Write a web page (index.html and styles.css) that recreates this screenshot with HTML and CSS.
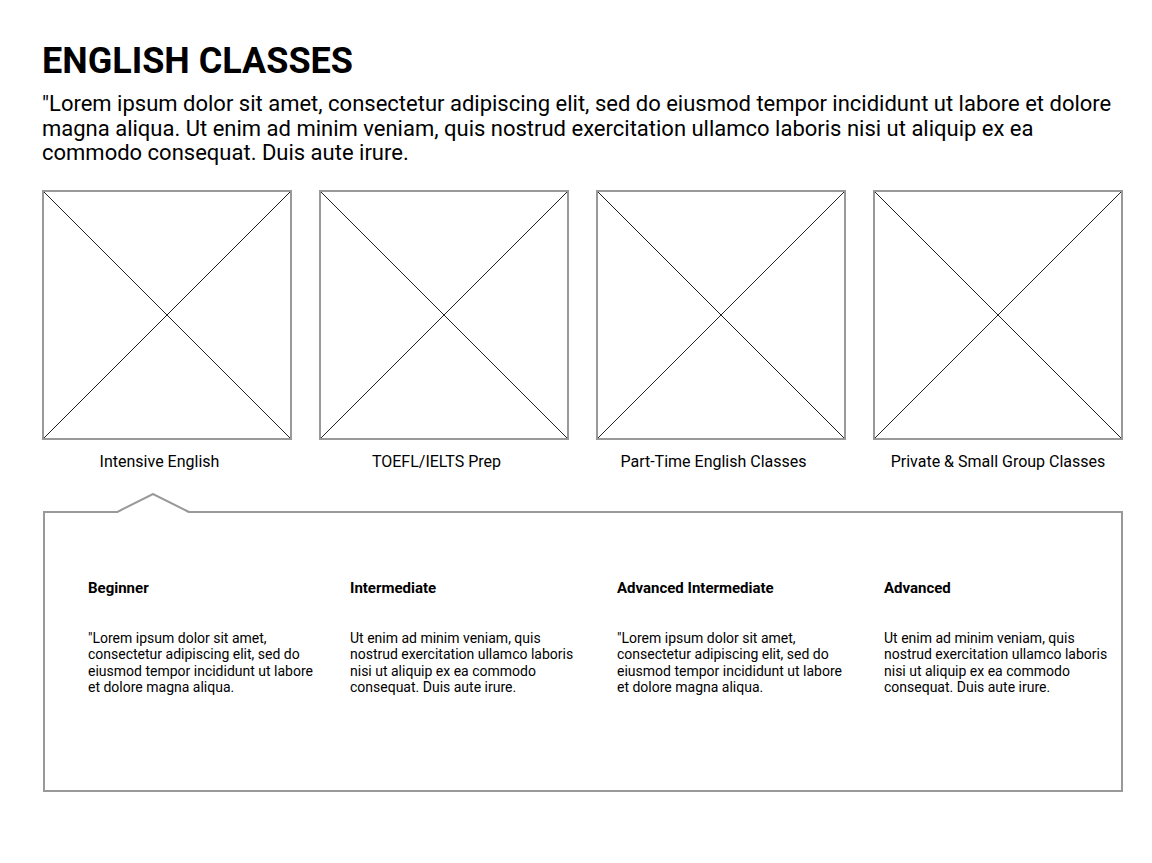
FILE: index.html
```html
<!DOCTYPE html>
<html lang="en">
<head>
  <meta charset="UTF-8" />
  <meta name="viewport" content="width=device-width, initial-scale=1.0"/>
  <title>English Classes</title>
  <link rel="stylesheet" href="styles.css">
</head>
<body>
  <h1>ENGLISH CLASSES</h1>
  <p class="intro">"Lorem ipsum dolor sit amet, consectetur adipiscing elit, sed do eiusmod tempor incididunt ut labore et dolore magna aliqua. Ut enim ad minim veniam, quis nostrud exercitation ullamco laboris nisi ut aliquip ex ea commodo consequat. Duis aute irure.</p>

  <div class="classes">
    <div class="class-card">
      <div class="placeholder">
        <svg viewBox="0 0 100 100" preserveAspectRatio="none"><line x1="0" y1="0" x2="100" y2="100"/><line x1="100" y1="0" x2="0" y2="100"/></svg>
      </div>
      <div class="label">Intensive English</div>
    </div>
    <div class="class-card">
      <div class="placeholder">
        <svg viewBox="0 0 100 100" preserveAspectRatio="none"><line x1="0" y1="0" x2="100" y2="100"/><line x1="100" y1="0" x2="0" y2="100"/></svg>
      </div>
      <div class="label">TOEFL/IELTS Prep</div>
    </div>
    <div class="class-card">
      <div class="placeholder">
        <svg viewBox="0 0 100 100" preserveAspectRatio="none"><line x1="0" y1="0" x2="100" y2="100"/><line x1="100" y1="0" x2="0" y2="100"/></svg>
      </div>
      <div class="label">Part-Time English Classes</div>
    </div>
    <div class="class-card">
      <div class="placeholder">
        <svg viewBox="0 0 100 100" preserveAspectRatio="none"><line x1="0" y1="0" x2="100" y2="100"/><line x1="100" y1="0" x2="0" y2="100"/></svg>
      </div>
      <div class="label label-last">Private &amp; Small Group Classes</div>
    </div>
  </div>

  <div class="panel">
    <svg class="notch" width="74" height="22" viewBox="0 0 74 22">
      <polygon points="0,20 37,2 72,20" fill="#fff"/>
      <polyline points="0,19 36,1 72,19" fill="none" stroke="#999" stroke-width="2"/>
    </svg>
    <div class="levels">
      <div class="level">
        <h3>Beginner</h3>
        <p>"Lorem ipsum dolor sit amet, consectetur adipiscing elit, sed do eiusmod tempor incididunt ut labore et dolore magna aliqua.</p>
      </div>
      <div class="level">
        <h3>Intermediate</h3>
        <p>Ut enim ad minim veniam, quis nostrud exercitation ullamco laboris nisi ut aliquip ex ea commodo consequat. Duis aute irure.</p>
      </div>
      <div class="level">
        <h3>Advanced Intermediate</h3>
        <p>"Lorem ipsum dolor sit amet, consectetur adipiscing elit, sed do eiusmod tempor incididunt ut labore et dolore magna aliqua.</p>
      </div>
      <div class="level">
        <h3>Advanced</h3>
        <p>Ut enim ad minim veniam, quis nostrud exercitation ullamco laboris nisi ut aliquip ex ea commodo consequat. Duis aute irure.</p>
      </div>
    </div>
  </div>
</body>
</html>
```

FILE: styles.css
```css
body {
  margin: 0;
  padding: 40px 29px 0 42px;
  font-family: Roboto, 'Liberation Sans', sans-serif;
  color: #000;
  background: #fff;
}

h1 {
  font-size: 36px;
  font-weight: 700;
  line-height: 42px;
  margin: 0;
}

.intro {
  font-size: 22px;
  line-height: 24.5px;
  margin: 10px 0 24px;
}

.classes {
  display: flex;
  gap: 27px;
}

.class-card {
  width: 250px;
}

.placeholder {
  width: 250px;
  height: 250px;
  box-sizing: border-box;
  border: 2px solid #999;
}

.placeholder svg {
  display: block;
  width: 100%;
  height: 100%;
}

.placeholder line {
  stroke: #222;
  stroke-width: 1;
  vector-effect: non-scaling-stroke;
}

.label {
  font-size: 16px;
  line-height: 18px;
  text-align: center;
  margin-top: 13px;
  padding-right: 15px;
}

.label-last {
  padding-right: 0;
}

.panel {
  position: relative;
  width: 1080px;
  height: 281px;
  box-sizing: border-box;
  margin: 40px 0 0 1px;
  border: 2px solid #999;
}

.notch {
  position: absolute;
  top: -20px;
  left: 72px;
}

.levels {
  display: grid;
  grid-template-columns: 262px 267px 267px 1fr;
  padding: 66px 0 0 43px;
}

.level h3 {
  font-size: 15px;
  font-weight: 700;
  line-height: 18px;
  margin: 0 0 33px;
}

.level p {
  font-size: 14px;
  line-height: 16.5px;
  margin: 0;
  width: 228px;
}
```
